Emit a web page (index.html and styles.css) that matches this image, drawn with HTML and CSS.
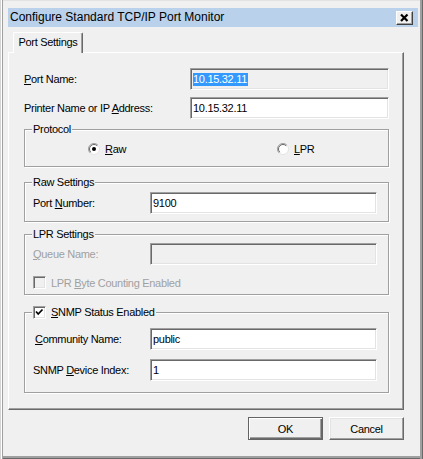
FILE: index.html
```html
<!DOCTYPE html>
<html>
<head>
<meta charset="utf-8">
<title>Configure Standard TCP/IP Port Monitor</title>
<link rel="stylesheet" href="styles.css">
</head>
<body>
<div class="window">
  <div class="titlebar">
    <span class="title">Configure Standard TCP/IP Port Monitor</span>
    <span class="close"><svg width="17" height="14" viewBox="0 0 17 14"><path d="M5 3.5 L11.5 10 M11.5 3.5 L5 10" stroke="#000" stroke-width="2.2" fill="none"/></svg></span>
  </div>
  <div class="tabs"><div class="tab">Port Settings</div></div>
  <div class="panel">
    <div class="row">
      <span class="label"><u>P</u>ort Name:</span>
      <div class="input wide readonly"><span class="sel">10.15.32.11</span></div>
    </div>
    <div class="row row2">
      <span class="label">Printer Name or IP <u>A</u>ddress:</span>
      <div class="input wide">10.15.32.11</div>
    </div>

    <div class="group protocol">
      <span class="legend">Protocol</span>
      <div class="opt">
        <svg class="radio" width="12" height="12" viewBox="0 0 12 12"><circle cx="6" cy="6" r="5.5" fill="#fff" stroke="#e3e3e3"/><path d="M2.1 9.9 A5.5 5.5 0 0 1 9.9 2.1" stroke="#a0a0a0" fill="none"/><path d="M2.8 9.2 A4.5 4.5 0 0 1 9.2 2.8" stroke="#696969" fill="none"/><circle cx="6" cy="6" r="2" fill="#000"/></svg>
        <span><u>R</u>aw</span>
      </div>
      <div class="opt">
        <svg class="radio" width="12" height="12" viewBox="0 0 12 12"><circle cx="6" cy="6" r="5.5" fill="#fff" stroke="#e3e3e3"/><path d="M2.1 9.9 A5.5 5.5 0 0 1 9.9 2.1" stroke="#a0a0a0" fill="none"/><path d="M2.8 9.2 A4.5 4.5 0 0 1 9.2 2.8" stroke="#696969" fill="none"/></svg>
        <span><u>L</u>PR</span>
      </div>
    </div>

    <div class="group raw">
      <span class="legend">Raw Settings</span>
      <div class="row">
        <span class="label">Port <u>N</u>umber:</span>
        <div class="input narrow">9100</div>
      </div>
    </div>

    <div class="group lpr">
      <span class="legend">LPR Settings</span>
      <div class="row">
        <span class="label disabled"><u>Q</u>ueue Name:</span>
        <div class="input narrow readonly"></div>
      </div>
      <div class="check-row disabled">
        <span class="checkbox off"></span>
        <span>LPR <u>B</u>yte Counting Enabled</span>
      </div>
    </div>

    <div class="group snmp">
      <span class="legend check-legend">
        <span class="checkbox"><svg width="11" height="11" viewBox="0 0 11 11"><path d="M2 4.5 L4.2 7 L8.5 2.5" stroke="#000" stroke-width="1.7" fill="none"/></svg></span>
        <span><u>S</u>NMP Status Enabled</span>
      </span>
      <div class="row">
        <span class="label indent"><u>C</u>ommunity Name:</span>
        <div class="input narrow">public</div>
      </div>
      <div class="row row-gap">
        <span class="label">SNMP <u>D</u>evice Index:</span>
        <div class="input narrow">1</div>
      </div>
    </div>
  </div>
  <div class="buttons">
    <button class="btn default">OK</button>
    <button class="btn">Cancel</button>
  </div>
</div>
</body>
</html>
```
FILE: styles.css
```css
* { box-sizing: border-box; }
html, body { margin: 0; padding: 0; background: #f0f0f0; }
body { font-family: "Liberation Sans", Arial, sans-serif; font-size: 11px; letter-spacing: -0.3px; color: #000; }

.window {
  width: 423px;
  height: 459px;
  background: #f0f0f0;
  padding-top: 8px;
  box-shadow: inset 1px 0 0 #d4d4d4, inset 2px 0 0 #fff, inset 3px 0 0 #a0a0a0,
              inset -1px 0 0 #696969, inset -3px 0 0 #a0a0a0,
              inset 0 -1px 0 #696969, inset 0 -3px 0 #a0a0a0,
              inset 0 1px 0 #e3e3e3;
}

.titlebar {
  margin-left: 8px;
  width: 410px;
  height: 19px;
  background: #b9d1ea;
  display: flex;
  align-items: center;
  justify-content: space-between;
  padding-left: 2px;
  padding-right: 5px;
}
.title { font-size: 12px; letter-spacing: 0; line-height: 19px; }
.close {
  width: 17px;
  height: 14px;
  display: block;
  background: #f0f0f0;
  border: 1px solid;
  border-color: #fff #404040 #404040 #fff;
  box-shadow: inset -1px -1px 0 #a0a0a0;
}
.close svg { display: block; margin: -1px 0 0 -1px; }

.tabs { margin: 5px 0 0 13px; display: flex; }
.tab {
  position: relative;
  z-index: 1;
  width: 70px;
  height: 21px;
  margin-bottom: -1px;
  background: #f0f0f0;
  border: 1px solid;
  border-bottom: 0;
  border-color: #fff #696969 #f0f0f0 #fff;
  border-radius: 2px 2px 0 0;
  box-shadow: inset -1px 0 0 #a0a0a0;
  text-align: center;
  line-height: 19px;
}

.panel {
  margin-left: 8px;
  width: 396px;
  height: 358px;
  border: 1px solid;
  border-color: #fff #696969 #696969 #fff;
  box-shadow: inset -1px -1px 0 #a0a0a0;
  padding: 15px 14px 0 15px;
}

.row { display: flex; align-items: center; justify-content: space-between; height: 22px; }
.row2 { margin-top: 7px; }
.row-gap { margin-top: 9px; }
.label { white-space: nowrap; }
.label.indent { padding-left: 2px; }
.disabled { color: #a0a0a0; }

.input {
  height: 22px;
  background: #fff;
  border: 1px solid;
  border-color: #a0a0a0 #fff #fff #a0a0a0;
  box-shadow: inset 1px 1px 0 #696969, inset -1px -1px 0 #e3e3e3;
  padding: 0 0 0 2px;
  line-height: 20px;
  white-space: nowrap;
}
.input.wide { width: 199px; }
.input.narrow { width: 227px; }
.input.readonly { background: #f0f0f0; }
.sel { background: #3399ff; color: #fff; display: inline-block; line-height: 13px; padding-right: 1px; }

.group {
  position: relative;
  border: 1px solid #a0a0a0;
  box-shadow: 1px 1px 0 #fff, inset 1px 1px 0 #fff;
}
.legend {
  position: absolute;
  top: -7px;
  left: 7px;
  padding: 0 1px;
  background: #f0f0f0;
  line-height: 13px;
  white-space: nowrap;
}

.protocol {
  margin-top: 10px;
  height: 38px;
  display: flex;
  align-items: center;
  padding: 2px 0 0 63px;
}
.opt { flex: none; width: 189px; display: flex; align-items: center; gap: 5px; }
.opt:last-child { width: auto; }
.radio { display: block; }

.raw { margin-top: 15px; padding: 9px 11px 7px 8px; }
.lpr { margin-top: 12px; padding: 8px 11px 5px 8px; }
.snmp { margin-top: 17px; padding: 15px 11px 11px 8px; }

.check-row { display: flex; align-items: center; gap: 5px; margin-top: 11px; height: 13px; }
.checkbox {
  width: 13px;
  height: 13px;
  display: block;
  flex: none;
  background: #fff;
  border: 1px solid;
  border-color: #a0a0a0 #fff #fff #a0a0a0;
  box-shadow: inset 1px 1px 0 #696969, inset -1px -1px 0 #e3e3e3;
}
.checkbox svg { display: block; }
.checkbox.off { background: #f0f0f0; }
.check-legend { display: flex; align-items: center; gap: 5px; color: #000; }

.buttons {
  width: 404px;
  display: flex;
  justify-content: flex-end;
  gap: 6px;
  margin-top: 7px;
}
.btn {
  width: 75px;
  height: 23px;
  font-family: "Liberation Sans", Arial, sans-serif;
  font-size: 11px;
  letter-spacing: -0.3px;
  color: #000;
  background: #f0f0f0;
  border: 1px solid;
  border-color: #fff #696969 #696969 #fff;
  box-shadow: inset -1px -1px 0 #a0a0a0, inset 1px 1px 0 #e3e3e3;
  padding: 0;
}
.btn.default {
  border-color: #646464;
  box-shadow: inset 1px 1px 0 #fff, inset -1px -1px 0 #696969, inset -2px -2px 0 #a0a0a0;
}
```
